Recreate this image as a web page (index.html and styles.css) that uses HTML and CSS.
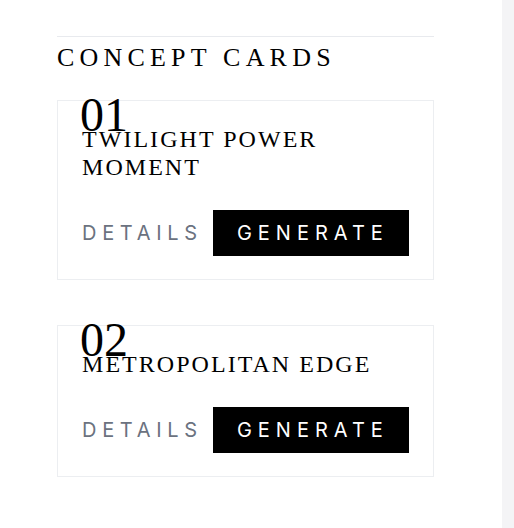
FILE: index.html
```html
<!DOCTYPE html>
<html lang="en">
<head>
<meta charset="utf-8">
<title>Concept Cards</title>
<link rel="stylesheet" href="styles.css">
</head>
<body>
<div class="page">
  <main class="main">
    <section class="concepts">
      <h2 class="concepts-title">CONCEPT CARDS</h2>
      <div class="card-list">
        <article class="card">
          <span class="card-num">01</span>
          <h3 class="card-title">TWILIGHT POWER MOMENT</h3>
          <div class="card-actions">
            <button class="btn-details">DETAILS</button>
            <button class="btn-generate">GENERATE</button>
          </div>
        </article>
        <article class="card">
          <span class="card-num">02</span>
          <h3 class="card-title">METROPOLITAN EDGE</h3>
          <div class="card-actions">
            <button class="btn-details">DETAILS</button>
            <button class="btn-generate">GENERATE</button>
          </div>
        </article>
      </div>
    </section>
  </main>
  <aside class="rail"></aside>
</div>
</body>
</html>
```
FILE: styles.css
```css
* { box-sizing: border-box; }
html, body { margin: 0; padding: 0; background: #ffffff; }
body { font-family: "Liberation Serif", "Times New Roman", serif; color: #000000; }
.page { display: flex; min-height: 528px; }
.main { flex: 1; padding: 36px 0 0 57px; }
.rail { width: 12px; background: #f4f4f6; }
.concepts { width: 377px; border-top: 1px solid #e8eaee; padding-top: 5px; }
.concepts-title {
  margin: 0 0 27px;
  font-size: 26px;
  font-weight: 400;
  line-height: 31px;
  letter-spacing: 0.2em;
  color: #000000;
}
.card-list { display: flex; flex-direction: column; gap: 45px; }
.card {
  position: relative;
  border: 1px solid #eceef1;
  padding: 24px 24px 23px;
}
.card-num {
  position: absolute;
  top: -10px;
  left: 22px;
  font-size: 48px;
  line-height: 48px;
  color: #000000;
}
.card-title {
  position: relative;
  margin: 0 0 29px;
  font-size: 24px;
  font-weight: 400;
  line-height: 28px;
  letter-spacing: 0.085em;
  color: #000000;
}
.card-actions { display: flex; align-items: center; gap: 10px; }
.btn-details, .btn-generate {
  font-family: Inter, "Liberation Sans", sans-serif;
  font-size: 20px;
  line-height: 24px;
  letter-spacing: 0.3em;
  border: 0;
  cursor: pointer;
}
.btn-details { background: none; padding: 0; color: #6b7280; letter-spacing: 0.285em; }
.btn-generate { background: #000000; color: #ffffff; padding: 11px 20px 11px 24px; }
```
